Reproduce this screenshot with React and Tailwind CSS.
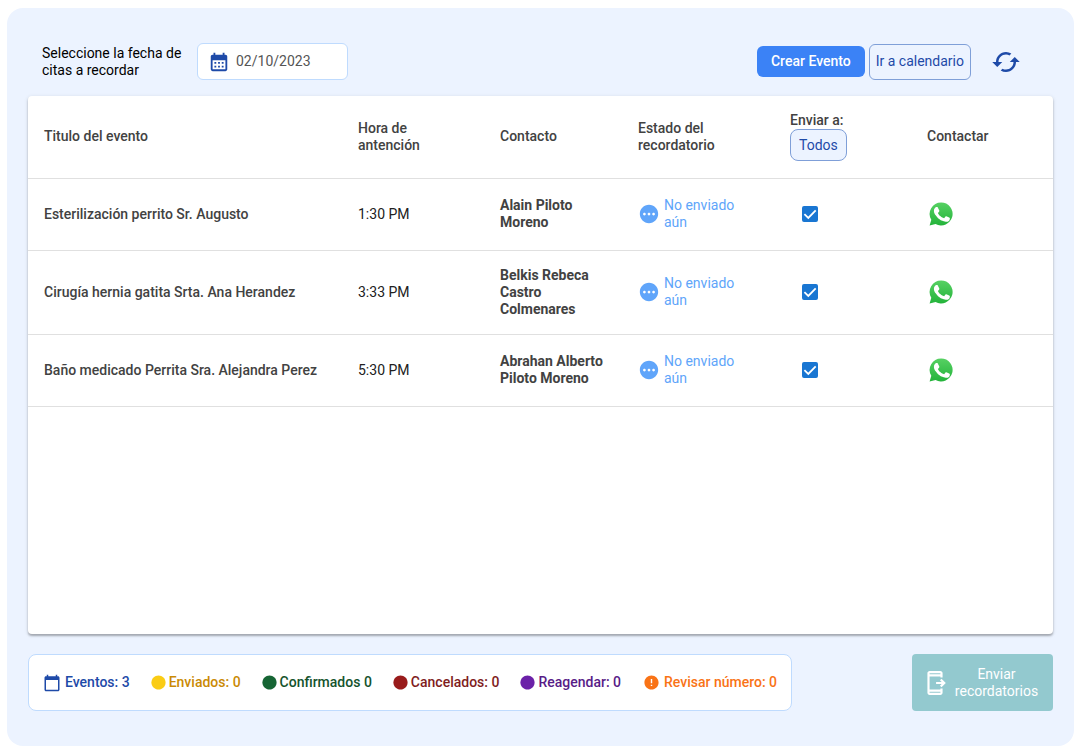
// src/App.jsx
import React, { useState } from "react";
import {
  MdCached,
  MdCalendarMonth,
  MdCalendarToday,
  MdCircle,
  MdError,
  MdOutlineSendToMobile,
  MdPending,
} from "react-icons/md";

const EVENTS = [
  { id: 1, title: "Esterilización perrito Sr. Augusto", time: "1:30 PM", contact: "Alain Piloto Moreno" },
  { id: 2, title: "Cirugía hernia gatita Srta. Ana Herandez", time: "3:33 PM", contact: "Belkis Rebeca Castro Colmenares" },
  { id: 3, title: "Baño medicado Perrita Sra. Alejandra Perez", time: "5:30 PM", contact: "Abrahan Alberto Piloto Moreno" },
];

function WhatsAppIcon() {
  return (
    <svg viewBox="0 0 24 24" className="size-6" aria-hidden="true">
      <defs>
        <linearGradient id="wa" x1="0" y1="0" x2="0" y2="1">
          <stop offset="0" stopColor="#57d163" />
          <stop offset="1" stopColor="#23b33a" />
        </linearGradient>
      </defs>
      <path fill="url(#wa)" d="M12.2.4A11.5 11.5 0 0 0 2.3 17.8L.6 23.6l6-1.6A11.5 11.5 0 1 0 12.2.4z" />
      <path
        fill="#fff"
        d="M8.9 5.700c-.3-.6-.5-.6-.8-.6h-.7c-.2 0-.6.1-1 .5-.3.4-1.500 1.400-1.500 3.300s1.400 3.900 1.600 4.100c.2.3 2.800 4.300 6.800 5.800 3.300 1.300 4 1.100 4.700 1 .8-.1 2.300-1 2.600-1.900.3-.9.3-1.600.2-1.800-.1-.2-.3-.3-.7-.5l-2.700-1.300c-.3-.1-.6-.2-.9.2l-1.200 1.500c-.2.3-.4.3-.8.1-.4-.2-1.700-.6-3.200-2-1.200-1-2-2.300-2.200-2.700-.2-.4 0-.6.2-.8l.6-.7c.2-.2.2-.4.400-.6.1-.3 0-.5 0-.7z"
      />
    </svg>
  );
}

function SendCheckbox({ label, checked, onChange }) {
  return (
    <label className="relative ml-3 flex size-4">
      <input
        type="checkbox"
        aria-label={label}
        checked={checked}
        onChange={onChange}
        className="peer size-4 appearance-none rounded-xs border-2 border-gray-500 checked:border-[#1976d2] checked:bg-[#1976d2]"
      />
      <svg viewBox="0 0 16 16" className="pointer-events-none absolute inset-0 hidden size-4 peer-checked:block" aria-hidden="true">
        <path d="M2.400 8.200l3.900 3.800 7.400-7.600" fill="none" stroke="#fff" strokeWidth="1.800" />
      </svg>
    </label>
  );
}

function EventRow({ event, checked, onToggle }) {
  return (
    <tr className="h-[72px] border-b border-[#e0e0e0]">
      <td className="px-4 font-medium">{event.title}</td>
      <td className="px-4 text-[#212121]">{event.time}</td>
      <td className="py-4 pr-2 pl-4 font-bold">{event.contact}</td>
      <td className="px-4 text-[#60a5fa]">
        <div className="flex items-center gap-1">
          <MdPending className="size-[22px] shrink-0" />
          <span>No enviado aún</span>
        </div>
      </td>
      <td className="px-4">
        <SendCheckbox label={"Enviar a " + event.contact} checked={checked} onChange={onToggle} />
      </td>
      <td className="px-4">
        <button type="button" aria-label={"Contactar a " + event.contact} className="ml-0.5 block">
          <WhatsAppIcon />
        </button>
      </td>
    </tr>
  );
}

function Stat({ icon, className, children }) {
  return (
    <div className={"flex items-center font-medium whitespace-nowrap " + className}>
      {icon}
      <span>{children}</span>
    </div>
  );
}

export default function App() {
  const [date, setDate] = useState("02/10/2023");
  const [selected, setSelected] = useState([1, 2, 3]);

  const toggle = (id) =>
    setSelected((prev) => (prev.includes(id) ? prev.filter((x) => x !== id) : [...prev, id]));

  const toggleAll = () =>
    setSelected((prev) => (prev.length === EVENTS.length ? [] : EVENTS.map((e) => e.id)));

  return (
    <div className="flex min-h-screen bg-white pt-2 pr-1.5 pb-1.5 pl-[7px] font-[Roboto,sans-serif] text-[14px] leading-[17px]">
      <main className="flex flex-1 flex-col rounded-2xl bg-[#ecf3ff] px-[21px] py-[35px]">
        <header className="flex items-center pl-3.5">
          <label htmlFor="fecha" className="w-[155px] text-black">
            Seleccione la fecha de citas a recordar
          </label>
          <div className="flex h-[37px] w-[151px] items-center gap-1.5 rounded-md border border-[#bfdbfe] bg-white pl-2.5">
            <MdCalendarMonth className="size-[22px] shrink-0 text-[#1e4aa8]" />
            <input
              id="fecha"
              value={date}
              onChange={(e) => setDate(e.target.value)}
              className="w-full min-w-0 bg-transparent text-[#555] outline-none"
            />
          </div>
          <div className="mr-8 ml-auto flex items-center gap-1">
            <button type="button" className="h-[31px] rounded-md bg-[#3b82f6] px-3.5 font-medium text-white">
              Crear Evento
            </button>
            <button type="button" className="h-9 rounded-md border border-[#7f9fd8] px-1.5 text-[#1e4aa8]">
              Ir a calendario
            </button>
            <button type="button" aria-label="Actualizar" className="ml-4 text-[#1e4aa8]">
              <MdCached className="size-[30px]" />
            </button>
          </div>
        </header>

        <section className="mt-4 flex-1 rounded bg-white shadow-[0_2px_2px_rgba(0,0,0,0.25),0_1px_4px_rgba(0,0,0,0.12)]">
          <table className="w-full table-fixed border-collapse text-left text-[#424242]">
            <thead>
              <tr className="h-[82px] border-b border-[#e0e0e0]">
                <th className="px-4 font-medium">Titulo del evento</th>
                <th className="w-[142px] px-4 font-medium">Hora de antención</th>
                <th className="w-[138px] px-4 font-medium">Contacto</th>
                <th className="w-[152px] px-4 font-medium">Estado del recordatorio</th>
                <th className="w-[137px] px-4 font-medium">
                  <span className="block">Enviar a:</span>
                  <button
                    type="button"
                    onClick={toggleAll}
                    className="h-8 rounded-lg border border-[#7f9fd8] bg-[#ecf3ff] px-2 font-normal text-[#1e4aa8]"
                  >
                    Todos
                  </button>
                </th>
                <th className="w-[142px] px-4 font-medium">Contactar</th>
              </tr>
            </thead>
            <tbody>
              {EVENTS.map((event) => (
                <EventRow
                  key={event.id}
                  event={event}
                  checked={selected.includes(event.id)}
                  onToggle={() => toggle(event.id)}
                />
              ))}
            </tbody>
          </table>
        </section>

        <footer className="mt-5 flex items-center justify-between">
          <div className="flex h-[57px] items-center gap-5 rounded-lg border border-[#bfdbfe] bg-white px-3.5">
            <Stat className="gap-1 text-[#1e4aa8]" icon={<MdCalendarToday className="size-[18px]" />}>Eventos: 3</Stat>
            <Stat className="gap-0.5 text-[#ca8a04]" icon={<MdCircle className="size-[17px] text-[#facc15]" />}>Enviados: 0</Stat>
            <Stat className="gap-0.5 text-[#14532d]" icon={<MdCircle className="size-[17px] text-[#166534]" />}>Confirmados 0</Stat>
            <Stat className="gap-0.5 text-[#7f1d1d]" icon={<MdCircle className="size-[17px] text-[#991b1b]" />}>Cancelados: 0</Stat>
            <Stat className="gap-0.5 text-[#581c87]" icon={<MdCircle className="size-[17px] text-[#6b21a8]" />}>Reagendar: 0</Stat>
            <Stat className="gap-1 pl-0.5 text-[#f97316]" icon={<MdError className="size-[17px]" />}>Revisar número: 0</Stat>
          </div>
          <button type="button" className="flex h-[57px] w-[141px] items-center gap-1 rounded bg-[#93c9cf] pr-3 pl-2.5 text-white">
            <MdOutlineSendToMobile className="size-[26px] shrink-0" />
            <span className="flex-1">Enviar recordatorios</span>
          </button>
        </footer>
      </main>
    </div>
  );
}
